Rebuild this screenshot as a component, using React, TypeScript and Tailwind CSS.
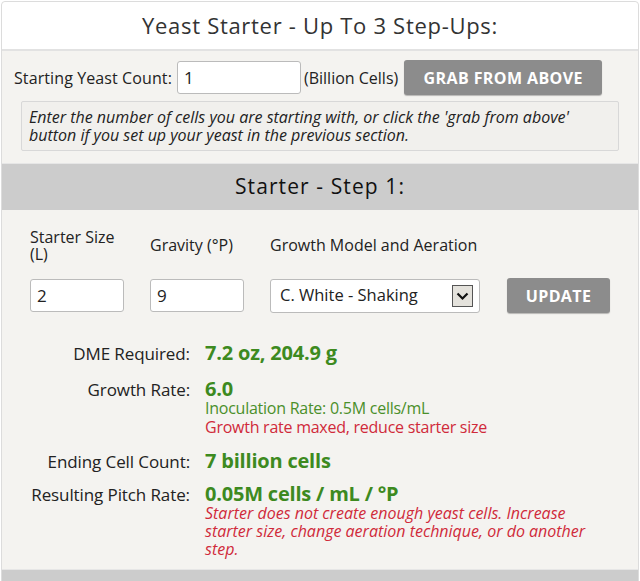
import React from 'react'

const font = { fontFamily: '"Open Sans", "Liberation Sans", sans-serif' }

function ResultRow({ label, className = '', children }: { label: string; className?: string; children: React.ReactNode }) {
  return (
    <div className={`flex items-baseline gap-[15px] ${className}`}>
      <div className="w-[174px] shrink-0 text-right text-[17px] leading-[24px] text-[#222] tracking-[-0.1px]">{label}</div>
      <div className="flex-1">{children}</div>
    </div>
  )
}

export default function App() {
  return (
    <div className="w-[640px] h-[581px] overflow-hidden bg-white" style={font}>
      <div className="mx-[1px] mt-[1px] border border-[#dcdcdc] rounded-t-[4px] bg-[#f4f3f0]">
        {/* Title */}
        <div className="h-[49px] bg-white border-b-2 border-[#e2e2e2] flex items-center justify-center rounded-t-[4px]">
          <h1 className="text-[22px] tracking-[0.7px] text-[#333] font-medium">Yeast Starter - Up To 3 Step-Ups:</h1>
        </div>

        {/* Starting count */}
        <div className="px-[12px] pt-[9px] pb-[12px]">
          <div className="flex items-center">
            <span className="text-[16px] text-[#222] tracking-[0.1px]">Starting Yeast Count:</span>
            <input
              defaultValue="1"
              className="ml-[5px] w-[124px] h-[33px] rounded-[3px] border border-[#bbb] bg-white px-[6px] text-[17px] text-[#222] outline-none"
            />
            <span className="ml-[3px] text-[16px] text-[#222]">(Billion Cells)</span>
            <button className="ml-[6px] w-[198px] h-[35px] rounded-[3px] bg-[#8c8c8c] text-white font-bold text-[16px] tracking-[0.4px] shadow-[0_1px_1px_rgba(0,0,0,0.25)]">
              GRAB FROM ABOVE
            </button>
          </div>
          <div className="mt-[6px] mx-[7px] border border-[#d8d8d8] rounded-[2px] bg-[#f1f0ed] pl-[7px] pr-[12px] py-[6px] text-[16px] italic leading-[18px] text-[#222]">
            Enter the number of cells you are starting with, or click the 'grab from above' button if you set up your yeast in the previous section.
          </div>
        </div>

        {/* Step header */}
        <div className="h-[47px] bg-[#cccccc] flex items-center justify-center border-t border-[#e6e6e6]">
          <h2 className="text-[21px] tracking-[1.1px] text-[#111] font-medium">Starter - Step 1:</h2>
        </div>

        {/* Inputs */}
        <div className="px-[28px] pt-[19px]">
          <div className="flex items-start text-[16px] leading-[17px] text-[#222] h-[49px]">
            <div className="w-[120px]">
              <div className="w-[94px]">Starter Size (L)</div>
            </div>
            <div className="w-[120px] pt-[8px]">Gravity (°P)</div>
            <div className="pt-[8px]">Growth Model and Aeration</div>
          </div>
          <div className="flex items-center">
            <input defaultValue="2" className="w-[94px] h-[33px] rounded-[3px] border border-[#bbb] bg-white px-[6px] text-[17px] text-[#222] outline-none" />
            <input defaultValue="9" className="ml-[26px] w-[94px] h-[33px] rounded-[3px] border border-[#bbb] bg-white px-[6px] text-[17px] text-[#222] outline-none" />
            <div className="ml-[26px] w-[212px] h-[34px] rounded-[3px] border border-[#bbb] bg-white flex items-center pl-[9px] pr-[6px]">
              <span className="flex-1 text-[16.5px] text-[#222]">C. White - Shaking</span>
              <div className="w-[21px] h-[22px] border border-[#555] bg-[#e4e2dc] flex items-center justify-center">
                <svg width="13" height="10" viewBox="0 0 13 10">
                  <path d="M1.5 2.5 L6.5 7.5 L11.5 2.5" fill="none" stroke="#111" strokeWidth="2.2" />
                </svg>
              </div>
            </div>
            <button className="ml-[27px] w-[104px] h-[35px] rounded-[3px] bg-[#8c8c8c] text-white font-bold text-[16px] tracking-[0.4px] shadow-[0_1px_1px_rgba(0,0,0,0.25)]">
              UPDATE
            </button>
          </div>
        </div>

        {/* Results */}
        <div className="pl-[14px] pt-[28px] pb-[11px] flex flex-col gap-[12px]">
          <ResultRow label="DME Required:">
            <div className="text-[20px] font-bold leading-[24px] text-[#3d8a1f] tracking-[-0.2px]">7.2 oz, 204.9 g</div>
          </ResultRow>
          <ResultRow label="Growth Rate:">
            <div className="text-[20px] font-bold leading-[20px] text-[#3d8a1f] tracking-[-0.2px]">6.0</div>
            <div className="text-[16px] leading-[19px] text-[#4a8f2a] tracking-[-0.25px]">Inoculation Rate: 0.5M cells/mL</div>
            <div className="text-[16px] leading-[19px] text-[#d02a3a] tracking-[-0.25px]">Growth rate maxed, reduce starter size</div>
          </ResultRow>
          <ResultRow label="Ending Cell Count:">
            <div className="text-[20px] font-bold leading-[24px] text-[#3d8a1f] tracking-[-0.2px]">7 billion cells</div>
          </ResultRow>
          <ResultRow label="Resulting Pitch Rate:" className="-mt-[3px]">
            <div className="text-[20px] font-bold leading-[20px] text-[#3d8a1f] tracking-[-0.2px]">0.05M cells / mL / °P</div>
            <div className="w-[390px] text-[16px] italic leading-[18px] text-[#d02a3a]">
              Starter does not create enough yeast cells. Increase starter size, change aeration technique, or do another step.
            </div>
          </ResultRow>
        </div>

        <div className="h-[20px] bg-[#cccccc] border-t border-[#e6e6e6]" />
      </div>
    </div>
  )
}
